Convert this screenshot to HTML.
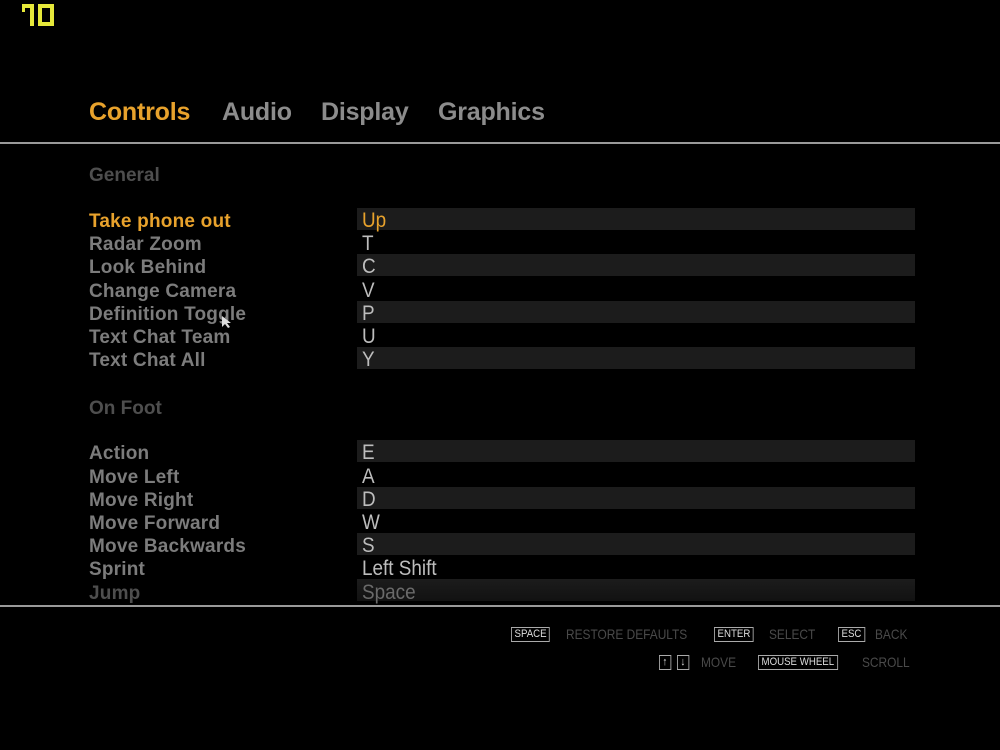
<!DOCTYPE html>
<html><head><meta charset="utf-8"><style>
body{margin:0;width:1000px;height:750px;background:#000;overflow:hidden;position:relative;font-family:"Liberation Sans",sans-serif}
.a{position:absolute;white-space:nowrap}
.tab{font-weight:bold;font-size:25px;color:#8c8c8c;top:98px;letter-spacing:-0.2px}
.hdr{font-weight:bold;font-size:19px;color:#4e4e4e;left:89px;margin-top:1px}
.lbl{font-weight:bold;font-size:19px;color:#7c7c7c;left:89px;line-height:22px;margin-top:2px;letter-spacing:0.2px}
.bar{left:357px;width:558px;height:22px;background:#1c1c1c}
.val{left:362px;font-size:21px;color:#bdbdbd;line-height:22px;transform:scaleX(0.9);transform-origin:0 0;margin-top:1px}
.line{left:0;width:1000px;height:2px;background:#9a9a9a}
.key{border:1px solid #aaa;color:#ddd;font-size:11px;padding:0 3px;line-height:13px;transform:scaleX(0.88);transform-origin:0 0}
.lab{color:#4a4a4a;font-size:14px;transform:scaleX(0.85);transform-origin:0 0;margin-top:-1px}
</style></head><body>
<svg class="a" style="left:22px;top:4px" width="36" height="24"><g fill="#e6e83a"><rect x="0" y="0" width="12" height="4"/><rect x="8" y="0" width="4" height="22"/><rect x="0" y="0" width="3" height="8"/><rect x="16" y="0" width="16" height="4"/><rect x="16" y="18" width="16" height="4"/><rect x="16" y="0" width="4" height="22"/><rect x="28" y="0" width="4" height="22"/></g></svg>
<div class="a tab" style="left:89px;color:#e8a22c">Controls</div>
<div class="a tab" style="left:222px">Audio</div>
<div class="a tab" style="left:321px">Display</div>
<div class="a tab" style="left:438px">Graphics</div>
<div class="a line" style="top:142px"></div>
<div class="a hdr" style="top:164px">General</div>
<div class="a bar" style="top:208px"></div>
<div class="a bar" style="top:254px"></div>
<div class="a bar" style="top:301px"></div>
<div class="a bar" style="top:347px"></div>
<div class="a lbl" style="top:209px;color:#e8a22c">Take phone out</div>
<div class="a lbl" style="top:232px">Radar Zoom</div>
<div class="a lbl" style="top:255px">Look Behind</div>
<div class="a lbl" style="top:279px">Change Camera</div>
<div class="a lbl" style="top:302px">Definition Toggle</div>
<div class="a lbl" style="top:325px">Text Chat Team</div>
<div class="a lbl" style="top:348px">Text Chat All</div>
<div class="a val" style="top:209px;color:#e8a22c">Up</div>
<div class="a val" style="top:232px">T</div>
<div class="a val" style="top:255px">C</div>
<div class="a val" style="top:279px">V</div>
<div class="a val" style="top:302px">P</div>
<div class="a val" style="top:325px">U</div>
<div class="a val" style="top:348px">Y</div>
<svg class="a" style="left:221px;top:315px" width="12" height="14"><path d="M1 1 L1 12 L4 9 L7 13 L9 12 L6 8 L10 8 Z" fill="#ddd"/></svg>
<div class="a hdr" style="top:397px">On Foot</div>
<div class="a bar" style="top:440px"></div>
<div class="a bar" style="top:487px"></div>
<div class="a bar" style="top:533px"></div>
<div class="a bar" style="top:579px;background:linear-gradient(#1c1c1c,#121212)"></div>
<div class="a lbl" style="top:441px">Action</div>
<div class="a lbl" style="top:465px">Move Left</div>
<div class="a lbl" style="top:488px">Move Right</div>
<div class="a lbl" style="top:511px">Move Forward</div>
<div class="a lbl" style="top:534px">Move Backwards</div>
<div class="a lbl" style="top:557px">Sprint</div>
<div class="a lbl" style="top:581px;color:#4e4e4e">Jump</div>
<div class="a val" style="top:441px">E</div>
<div class="a val" style="top:465px">A</div>
<div class="a val" style="top:488px">D</div>
<div class="a val" style="top:511px">W</div>
<div class="a val" style="top:534px">S</div>
<div class="a val" style="top:557px">Left Shift</div>
<div class="a val" style="top:581px;color:#6a6a6a">Space</div>
<div class="a line" style="top:605px"></div>
<div class="a key" style="left:511px;top:627px">SPACE</div>
<div class="a lab" style="left:566px;top:627px">RESTORE DEFAULTS</div>
<div class="a key" style="left:714px;top:627px">ENTER</div>
<div class="a lab" style="left:769px;top:627px">SELECT</div>
<div class="a key" style="left:838px;top:627px">ESC</div>
<div class="a lab" style="left:875px;top:627px">BACK</div>
<div class="a key" style="left:659px;top:655px">↑</div>
<div class="a key" style="left:677px;top:655px">↓</div>
<div class="a lab" style="left:701px;top:655px">MOVE</div>
<div class="a key" style="left:758px;top:655px">MOUSE WHEEL</div>
<div class="a lab" style="left:862px;top:655px">SCROLL</div>
</body></html>
